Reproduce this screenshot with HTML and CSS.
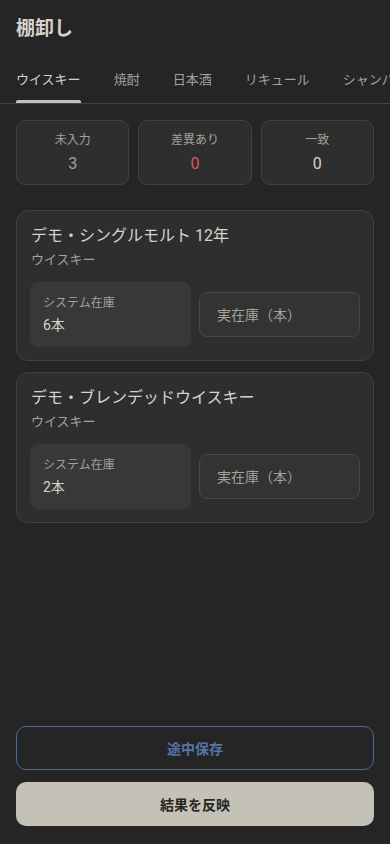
FILE: index.html
```html
<!DOCTYPE html>
<html lang="ja">
<head>
    <meta charset="UTF-8">
    <meta name="viewport" content="width=device-width, initial-scale=1.0">
    <title>棚卸し</title>
    <link rel="stylesheet" href="styles.css">
</head>
<body>
    <div class="app">
        <div class="header">
            <h1>棚卸し</h1>
        </div>

        <div class="tabs">
            <div class="tab active"><span>ウイスキー</span></div>
            <div class="tab"><span>焼酎</span></div>
            <div class="tab"><span>日本酒</span></div>
            <div class="tab"><span>リキュール</span></div>
            <div class="tab"><span>シャンパン</span></div>
        </div>

        <div class="summary">
            <div class="summary-card">
                <div class="summary-label">未入力</div>
                <div class="summary-value">3</div>
            </div>
            <div class="summary-card">
                <div class="summary-label">差異あり</div>
                <div class="summary-value diff">0</div>
            </div>
            <div class="summary-card">
                <div class="summary-label">一致</div>
                <div class="summary-value match">0</div>
            </div>
        </div>

        <div class="item-list">
            <div class="item-card">
                <div class="item-name">デモ・シングルモルト 12年</div>
                <div class="item-category">ウイスキー</div>
                <div class="stock-row">
                    <div class="system-stock">
                        <div class="stock-label">システム在庫</div>
                        <div class="stock-value">6本</div>
                    </div>
                    <input class="stock-input" type="text" placeholder="実在庫（本）">
                </div>
            </div>

            <div class="item-card">
                <div class="item-name">デモ・ブレンデッドウイスキー</div>
                <div class="item-category">ウイスキー</div>
                <div class="stock-row">
                    <div class="system-stock">
                        <div class="stock-label">システム在庫</div>
                        <div class="stock-value">2本</div>
                    </div>
                    <input class="stock-input" type="text" placeholder="実在庫（本）">
                </div>
            </div>
        </div>

        <div class="footer">
            <button class="btn btn-outline">途中保存</button>
            <button class="btn btn-primary">結果を反映</button>
        </div>
    </div>
</body>
</html>
```

FILE: styles.css
```css
:root {
    --bg-color: #252525;
    --card-color: #2e2e2e;
    --card-border: #414141;
    --box-color: #383838;
    --text-main: #d6d4ca;
    --text-sub: #a3a199;
    --accent-blue: #4c6a9e;
    --diff-red: #d9566c;
    --light-button: #c4c2b6;
}

* {
    box-sizing: border-box;
}

body {
    font-family: Roboto, "Noto Sans CJK JP", sans-serif;
    margin: 0;
    background-color: var(--bg-color);
    color: var(--text-main);
}

.app {
    min-height: 844px;
    display: flex;
    flex-direction: column;
}

.header {
    padding: 16px 16px 0;
}

.header h1 {
    margin: 0;
    font-size: 19px;
    line-height: 26px;
    font-weight: 700;
    color: var(--text-main);
}

.tabs {
    display: flex;
    margin-top: 28px;
    padding-left: 16px;
    border-bottom: 1px solid #444444;
    overflow: hidden;
    white-space: nowrap;
}

.tab {
    margin-right: 33px;
    font-size: 13px;
    line-height: 20px;
    color: var(--text-sub);
    flex-shrink: 0;
}

.tab span {
    display: block;
    padding-bottom: 13px;
    position: relative;
}

.tab.active {
    color: var(--text-main);
}

.tab.active span::after {
    content: "";
    position: absolute;
    left: 0;
    right: 0;
    bottom: 0;
    height: 3px;
    border-radius: 2px 2px 0 0;
    background-color: var(--light-button);
}

.summary {
    display: grid;
    grid-template-columns: repeat(3, 1fr);
    gap: 9px;
    padding: 16px 16px 0;
}

.summary-card {
    background: var(--card-color);
    border: 1px solid var(--card-border);
    border-radius: 9px;
    height: 65px;
    padding-top: 10px;
    text-align: center;
}

.summary-label {
    font-size: 12px;
    line-height: 18px;
    color: var(--text-sub);
}

.summary-value {
    font-size: 16px;
    line-height: 24px;
    margin-top: 3px;
    color: var(--text-sub);
}

.summary-value.diff {
    color: var(--diff-red);
}

.summary-value.match {
    color: var(--text-main);
}

.item-list {
    display: flex;
    flex-direction: column;
    gap: 11px;
    padding: 25px 16px 0;
}

.item-card {
    background: var(--card-color);
    border: 1px solid var(--card-border);
    border-radius: 12px;
    padding: 13px 13px 13px;
}

.item-name {
    font-size: 16px;
    line-height: 24px;
    padding-left: 1px;
}

.item-category {
    font-size: 13px;
    line-height: 20px;
    margin-top: 2px;
    padding-left: 1px;
    color: var(--text-sub);
}

.stock-row {
    display: grid;
    grid-template-columns: 1fr 1fr;
    gap: 8px;
    align-items: center;
    margin-top: 12px;
}

.system-stock {
    background: var(--box-color);
    border-radius: 8px;
    height: 65px;
    padding: 12px 13px 0;
}

.stock-label {
    font-size: 12px;
    line-height: 18px;
    color: var(--text-sub);
}

.stock-value {
    font-size: 14px;
    line-height: 22px;
    margin-top: 2px;
}

.stock-input {
    width: 100%;
    height: 45px;
    background: #333333;
    border: 1px solid #474747;
    border-radius: 8px;
    padding: 0 17px;
    font-family: inherit;
    font-size: 14px;
    color: var(--text-main);
    outline: none;
}

.stock-input::placeholder {
    color: var(--text-sub);
}

.footer {
    margin-top: auto;
    display: flex;
    flex-direction: column;
    gap: 12px;
    padding: 0 16px 18px;
}

.btn {
    height: 44px;
    border-radius: 10px;
    font-family: inherit;
    font-size: 14px;
    font-weight: 700;
    cursor: pointer;
}

.btn-outline {
    background: transparent;
    border: 1px solid var(--accent-blue);
    color: #5674a8;
}

.btn-primary {
    background: var(--light-button);
    border: none;
    color: #262626;
}
```
